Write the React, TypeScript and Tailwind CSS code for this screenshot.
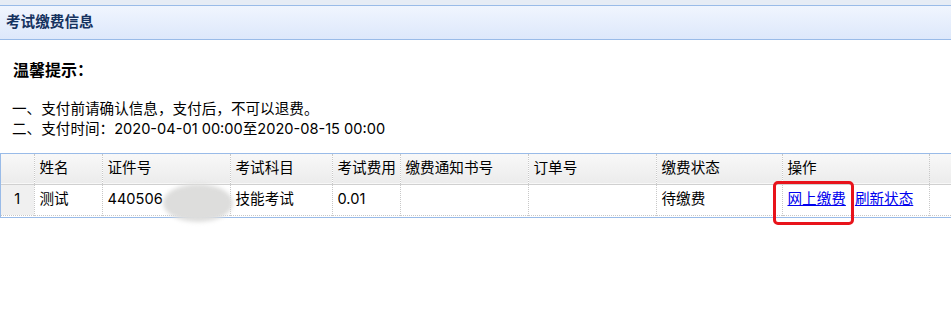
import React from "react";

const font = { fontFamily: 'Inter, "Noto Sans CJK SC", sans-serif' };

const columns = [
  { key: "idx", title: "", width: 33 },
  { key: "name", title: "姓名", width: 68 },
  { key: "card", title: "证件号", width: 128 },
  { key: "subject", title: "考试科目", width: 102 },
  { key: "fee", title: "考试费用", width: 68 },
  { key: "notice", title: "缴费通知书号", width: 128 },
  { key: "order", title: "订单号", width: 128 },
  { key: "status", title: "缴费状态", width: 126 },
  { key: "op", title: "操作", width: 147 },
];

const cell = "px-[5px] whitespace-nowrap overflow-hidden border-r border-dotted border-[#c8c8c8]";

export default function App() {
  return (
    <div
      className="relative w-[951px] h-[315px] bg-white text-black overflow-hidden"
      style={font}
    >
      <div className="h-[5px] bg-[#e6ecf5]" />
      <div className="h-[35px] border-y border-[#99bbe8] bg-gradient-to-b from-[#f0f5fe] to-[#dde8fb] flex items-center px-[6px]">
        <span className="text-[14.6px] font-bold text-[#15325f]">考试缴费信息</span>
      </div>

      <div className="pl-[13px] pt-[19px]">
        <h3 className="text-[16px] font-bold leading-[22px]">温馨提示：</h3>
      </div>
      <div className="pl-[12px] pt-[18px] text-[14.6px] leading-[20px]">
        <p>一、支付前请确认信息，支付后，不可以退费。</p>
        <p>二、支付时间：2020-04-01 00:00至2020-08-15 00:00</p>
      </div>

      <div className="mt-[14px] border-t border-l border-b border-[#99bbe8] pb-[1px]">
        <table className="table-fixed border-collapse text-[14.6px] w-full">
          <colgroup>
            {columns.map((c) => (
              <col key={c.key} style={{ width: c.width }} />
            ))}
            <col />
          </colgroup>
          <thead>
            <tr className="h-[30px] bg-gradient-to-b from-[#f8f8f8] to-[#ececec] border-b border-[#d0d0d0]">
              {columns.map((c) => (
                <th key={c.key} className={`font-normal text-left ${cell}`}>
                  {c.title}
                </th>
              ))}
              <th />
            </tr>
          </thead>
          <tbody>
            <tr className="h-[31px] border-b border-dotted border-[#c8c8c8]">
              <td className="text-center bg-[#f0f0f0] border-r border-dotted border-[#c8c8c8]">1</td>
              <td className={cell}>测试</td>
              <td className={cell}>440506</td>
              <td className={cell}>技能考试</td>
              <td className={cell}>0.01</td>
              <td className={cell} />
              <td className={cell} />
              <td className={cell}>待缴费</td>
              <td className={cell}>
                <a href="#" className="text-[#0000ee] underline">网上缴费</a>
                <a href="#" className="text-[#0000ee] underline ml-[9px]">刷新状态</a>
              </td>
              <td />
            </tr>
          </tbody>
        </table>
      </div>

      {/* blurred id number */}
      <div className="absolute left-[163px] top-[184px] w-[70px] h-[38px] rounded-[50%] bg-[#dddddc] blur-[2px]" />
      {/* red highlight */}
      <div className="absolute left-[773px] top-[181px] w-[81px] h-[44px] rounded-[5px] border-[3px] border-[#e8131b]" />
    </div>
  );
}
